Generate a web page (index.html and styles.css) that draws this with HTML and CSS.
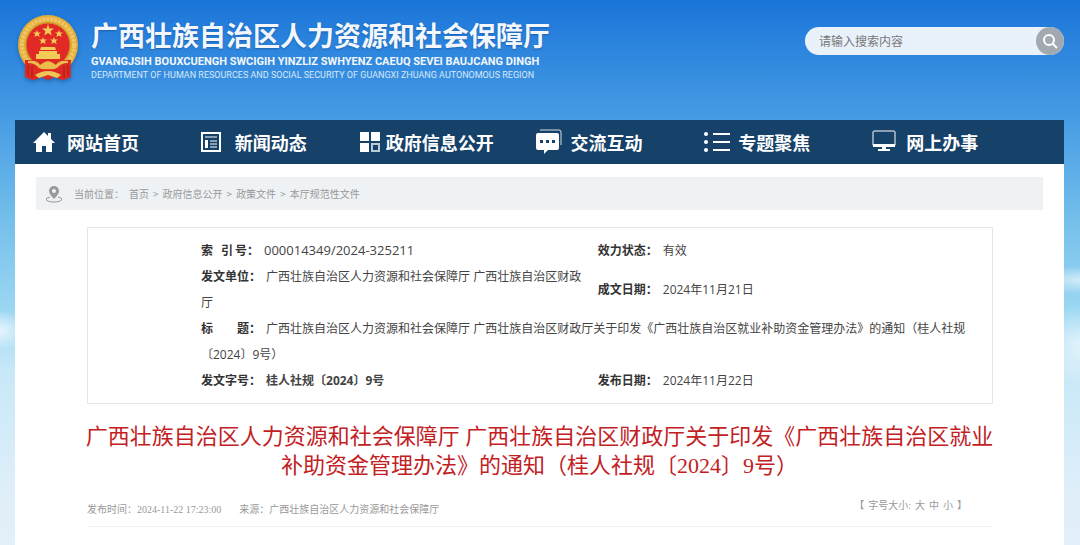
FILE: index.html
```html
<!DOCTYPE html>
<html lang="zh-CN">
<head>
    <meta charset="UTF-8">
    <meta name="viewport" content="width=device-width, initial-scale=1.0">
    <title>广西壮族自治区人力资源和社会保障厅</title>
    <link rel="stylesheet" href="styles.css">
</head>
<body>
    <div class="container">
        <header class="header">
            <a class="logo" href="#">
                <svg class="emblem" viewBox="0 0 60 66" aria-hidden="true">
                    <path d="M8 44 L7 62 L15 65 L24 62 L30 65 L36 62 L45 65 L53 62 L52 44Z" fill="#d92a22"/>
                    <circle cx="30" cy="30" r="30" fill="#e2ad3c"/>
                    <circle cx="30" cy="30" r="26" fill="none" stroke="#efc660" stroke-width="4" stroke-dasharray="3 1"/>
                    <circle cx="30" cy="30" r="22" fill="#e12a25" stroke="#c98a22"/>
                    <g fill="#f3cb58">
                        <path d="M30 9l1.500 4.500H36l-3.500 2.700 1.300 4.300L30 18l-3.800 2.500 1.300-4.300-3.500-2.700h4.500z"/>
                        <path d="M19 15l1 2.500h3l-2.200 1.600.8 2.900-2.600-1.600-2.600 1.600.8-2.900-2.200-1.600h3z"/>
                        <path d="M41 15l1 2.500h3l-2.200 1.600.8 2.900-2.600-1.600-2.600 1.600.8-2.900-2.200-1.600h3z"/>
                        <path d="M25 22l1 2.500h3l-2.200 1.600.8 2.900-2.600-1.600-2.600 1.600.8-2.900-2.200-1.600h3z"/>
                        <path d="M36 22l1 2.500h3l-2.200 1.600.8 2.900-2.600-1.600-2.600 1.600.8-2.900-2.200-1.600h3z"/>
                        <path d="M23 32h14l1 3H22zM21 36h18v3h3v5H18v-5h3z"/>
                    </g>
                    <path d="M7 45h46l-1 17-7 3-9-3-6 3-6-3-9 3-8-3z" fill="#dd2a22"/>
                    <path d="M10 46q9-1 12 4l3-2a6 4 0 0 1 10 0l3 2q3-5 12-4v2q-7 0-11 5-4 2-9 1-5 1-9-1-4-5-11-5z" fill="#ecbd4b"/>
                    <path d="M17 60q13-8 26 0l-4 3-9-3-9 3z" fill="#efc556"/>
                    <path d="M14 51v12M46 51v12M10 50v11M50 50v11" stroke="#a51a18"/>
                </svg>
                <span class="logo-text">
                    <strong class="logo-cn">广西壮族自治区人力资源和社会保障厅</strong>
                    <span class="logo-za">GVANGJSIH BOUXCUENGH SWCIGIH YINZLIZ SWHYENZ CAEUQ SEVEI BAUJCANG DINGH</span>
                    <span class="logo-en">DEPARTMENT OF HUMAN RESOURCES AND SOCIAL SECURITY OF GUANGXI ZHUANG AUTONOMOUS REGION</span>
                </span>
            </a>
            <form class="search" role="search">
                <input type="text" aria-label="搜索" placeholder="请输入搜索内容">
                <button type="button" aria-label="搜索">
                    <svg viewBox="0 0 28 28"><circle cx="13" cy="13" r="5" /><path d="M17 17l4 4"/></svg>
                </button>
            </form>
        </header>

        <nav class="nav">
            <a href="#">
                <svg viewBox="0 0 26 26"><path d="M11 3L0 14h3v9h6v-6h4v6h6v-9h3l-4-4V4h-3v3z" fill="#fff"/></svg>
                网站首页
            </a>
            <a href="#">
                <svg viewBox="0 0 26 26"><path d="M1 4h18v18H1z" fill="none" stroke="#fff" stroke-width="2"/><path d="M4 8h12M9 12h7M9 15h7M9 18h7" fill="none" stroke="#fff"/><path d="M4 11h3v8H4z" fill="#fff"/></svg>
                新闻动态
            </a>
            <a class="nav-long" href="#">
                <svg viewBox="0 0 26 26"><path d="M0 3h9v9H0zM11 3h9v9h-9zM0 14h9v9H0z" fill="#fff"/><path d="M12 15h7v7h-7z" fill="none" stroke="#b9c9d8" stroke-width="2"/></svg>
                政府信息公开
            </a>
            <a href="#">
                <svg viewBox="0 0 26 26"><path d="M4 1h19q2 0 2 2v13" fill="none" stroke="#d5dfe8"/><path d="M2 4h19q2 0 2 2v13q0 2-2 2h-9l-4 4v-4H2q-2 0-2-2V6q0-2 2-2z" fill="#fff"/><path d="M4 11h3v3H4zM10 11h3v3h-3zM16 11h3v3h-3z" fill="#164169"/></svg>
                交流互动
            </a>
            <a href="#">
                <svg viewBox="0 0 26 26"><circle cx="2" cy="5" r="2" fill="#fff"/><circle cx="2" cy="13" r="2" fill="#fff"/><circle cx="2" cy="21" r="2" fill="#fff"/><path d="M9 5h17M9 13h17M9 21h17" stroke="#fff" stroke-width="2"/></svg>
                专题聚焦
            </a>
            <a href="#">
                <svg viewBox="0 0 26 26"><rect x="1" y="2" width="22" height="15" rx="1" fill="none" stroke="#fff"/><path d="M1 15h22v3H1zM10 18h4v2h4v2H6v-2h4z" fill="#fff"/></svg>
                网上办事
            </a>
        </nav>

        <main class="main">
            <div class="position">
                <svg viewBox="0 0 16 18" aria-hidden="true"><path d="M8 1a5 5 0 0 0-5 5q0 3 5 8 5-5 5-8a5 5 0 0 0-5-5z" fill="#999"/><circle cx="8" cy="6" r="2" fill="#eef2f5"/><path d="M4 12q-4 1-4 2c0 4 16 4 16 0q0-1-4-2" fill="none" stroke="#999"/></svg>
                <span class="label">当前位置：</span>
                <div class="crumbs"><a href="#">首页</a><span>&gt;</span><a href="#">政府信息公开</a><span>&gt;</span><a href="#">政策文件</a><span>&gt;</span><a href="#">本厅规范性文件</a></div>
            </div>

            <!-- 文件信息 -->
            <div class="info">
                <table>
                    <tr>
                        <td><b>索&ensp;&thinsp;引&thinsp;号：</b><span class="index-no">000014349/2024-325211</span></td>
                        <td><b>效力状态：</b>有效</td>
                    </tr>
                    <tr>
                        <td><b>发文单位：</b>广西壮族自治区人力资源和社会保障厅 广西壮族自治区财政厅</td>
                        <td><b>成文日期：</b>2024年11月21日</td>
                    </tr>
                    <tr>
                        <td colspan="2"><b>标　　题：</b>广西壮族自治区人力资源和社会保障厅 广西壮族自治区财政厅关于印发《广西壮族自治区就业补助资金管理办法》的通知（桂人社规〔2024〕9号）</td>
                    </tr>
                    <tr>
                        <td><b>发文字号：</b><strong>桂人社规〔2024〕9号</strong></td>
                        <td><b>发布日期：</b>2024年11月22日</td>
                    </tr>
                </table>
            </div>

            <!-- 正文标题 -->
            <h1>广西壮族自治区人力资源和社会保障厅 广西壮族自治区财政厅关于印发《广西壮族自治区就业补助资金管理办法》的通知（桂人社规〔2024〕9号）</h1>
            <div class="meta">
                <p class="source"><span>发布时间：2024-11-22 17:23:00</span><span>来源：广西壮族自治区人力资源和社会保障厅</span></p>
                <p class="font-size"><span>【</span><span>字号大小:</span><button type="button">大</button><button type="button">中</button><button type="button">小</button><span>】</span></p>
            </div>
        </main>
    </div>
</body>
</html>
```
FILE: styles.css
```css
* {
    box-sizing: border-box;
}
body {
    margin: 0;
    min-height: 100vh;
    font-family: "Open Sans", "Noto Sans CJK SC", sans-serif;
    font-size: 12px;
    color: #444;
    background:
        radial-gradient(ellipse 50px 14px at 100% 280px, rgba(255, 255, 255, 0.6), transparent),
        radial-gradient(ellipse 40px 40px at 100% 345px, rgba(255, 255, 255, 0.6), transparent),
        radial-gradient(ellipse 30px 20px at 0 330px, rgba(255, 255, 255, 0.7), transparent),
        linear-gradient(#1b75d9 0, #469ce4 118px, #74bfeb 220px, #9bd7f2 310px, #c8e8f7 370px, #e0effa 500px, #e3effa 545px);
}
a {
    color: inherit;
    text-decoration: none;
}
button {
    padding: 0;
    border: none;
    background: none;
    font: inherit;
    color: inherit;
    cursor: pointer;
}
.container {
    display: flex;
    flex-direction: column;
    min-height: 100vh;
    margin: 0 16px 0 15px;
}

/* 头部 */
.header {
    display: flex;
    justify-content: space-between;
    align-items: flex-start;
    height: 120px;
}
.logo {
    display: flex;
    gap: 13px;
    padding: 15px 0 0 3px;
    color: #f3f7fb;
}
.emblem {
    width: 60px;
    height: 66px;
    filter: drop-shadow(0 2px 2px rgba(0, 50, 110, 0.4));
}
.logo-text {
    display: flex;
    flex-direction: column;
    white-space: nowrap;
}
.logo-cn {
    font-family: "Noto Sans CJK SC", sans-serif;
    font-size: 27px;
    line-height: 40px;
    text-shadow: 0 1px 2px rgba(0, 50, 110, 0.4);
}
.logo-za {
    font-family: Roboto, sans-serif;
    font-size: 11px;
    font-weight: bold;
    line-height: 13px;
}
.logo-en {
    font-family: Roboto, sans-serif;
    font-size: 9px;
    line-height: 14px;
    color: #d8e8f8;
}
.search {
    display: flex;
    width: 259px;
    height: 28px;
    margin-top: 27px;
    border-radius: 14px;
    background: #e9f1fb;
}
.search input {
    flex: 1;
    min-width: 0;
    padding: 0 14px;
    border: none;
    outline: none;
    background: none;
    font: inherit;
}
.search input::placeholder {
    color: #777;
}
.search button {
    width: 28px;
    height: 28px;
    border-radius: 50%;
    background: #a3a9b1;
}
.search svg {
    display: block;
    fill: none;
    stroke: #fff;
    stroke-width: 2;
}

/* 导航 */
.nav {
    display: flex;
    height: 44px;
    background: #164169;
}
.nav a {
    display: flex;
    align-items: center;
    gap: 8px;
    width: 16%;
    padding-left: 18px;
    color: #fff;
    font-family: "Noto Sans CJK SC", sans-serif;
    font-size: 18px;
    font-weight: bold;
    white-space: nowrap;
}
.nav a.nav-long {
    gap: 0;
    padding-left: 9px;
}
.nav svg {
    flex: none;
    width: 26px;
    height: 26px;
}

/* 内容 */
.main {
    flex: 1;
    padding: 13px 21px 0;
    background: #fff;
}
.position {
    display: flex;
    align-items: center;
    height: 33px;
    padding-left: 10px;
    background: #eef2f5;
    color: #999;
    font-family: "Noto Sans CJK SC", sans-serif;
    font-size: 10px;
}
.position svg {
    width: 16px;
    height: 18px;
}
.position .label {
    margin: 0 5px 0 12px;
}
.crumbs {
    display: flex;
    gap: 4px;
}
.info {
    margin: 17px 50px 0 51px;
    padding: 9px 13px 9px 113px;
    border: 1px solid #e6e6e6;
}
.info table {
    width: 100%;
    border-collapse: collapse;
    table-layout: fixed;
}
.info td {
    padding: 0 8px 0 0;
    line-height: 26px;
}
.info td:first-child {
    width: 51%;
}
.info b {
    margin-right: 5px;
    color: #333;
}
.index-no {
    font-size: 13px;
}
h1 {
    margin: 18px 40px 0;
    font-family: "Liberation Serif", "Noto Sans CJK SC", serif;
    font-size: 22px;
    font-weight: normal;
    line-height: 29px;
    text-align: center;
    color: #c2211f;
}
.meta {
    display: flex;
    justify-content: space-between;
    align-items: flex-start;
    margin: 18px 50px 0 51px;
    padding-bottom: 8px;
    border-bottom: 1px solid #f0f0f0;
    font-family: "Liberation Serif", "Noto Sans CJK SC", serif;
    font-size: 10px;
    line-height: 16px;
    color: #999;
}
.meta p {
    margin: 0;
}
.meta .source {
    display: flex;
    gap: 18px;
    padding-top: 4px;
}
.meta .font-size {
    display: flex;
    gap: 4px;
    padding-right: 26px;
}
```
